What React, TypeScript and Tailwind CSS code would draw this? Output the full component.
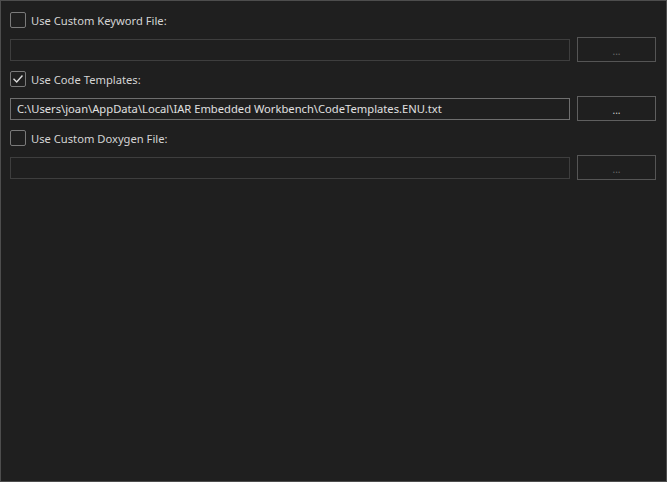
type Group = {
  key: string
  label: string
  checked: boolean
  value: string
}

const groups: Group[] = [
  { key: 'keyword', label: 'Use Custom Keyword File:', checked: false, value: '' },
  {
    key: 'templates',
    label: 'Use Code Templates:',
    checked: true,
    value: 'C:\\Users\\joan\\AppData\\Local\\IAR Embedded Workbench\\CodeTemplates.ENU.txt',
  },
  { key: 'doxygen', label: 'Use Custom Doxygen File:', checked: false, value: '' },
]

const Checkbox = ({ checked }: { checked: boolean }) => (
  <span className="flex h-[16px] w-[16px] items-center justify-center rounded-[2px] border-[1.5px] border-[#7a7a7a] bg-[#1f1f1f]">
    {checked && (
      <svg width="12" height="12" viewBox="0 0 12 12" fill="none">
        <path d="M2 6.3 L4.7 9 L10 3" stroke="#dcdcdc" strokeWidth="1.4" strokeLinecap="square" />
      </svg>
    )}
  </span>
)

export default function App() {
  return (
    <div
      className="h-[482px] w-[667px] border border-[#4d4d4d] bg-[#1f1f1f] px-[9px] pt-[11px] text-[11.2px] text-[#d4d4d4]"
      style={{ fontFamily: '"Noto Sans", "Open Sans", sans-serif' }}
    >
      {groups.map((g) => {
        const enabled = g.checked
        return (
          <div key={g.key} className="mb-[9px]">
            <label className="flex h-[16px] items-center gap-[5px]">
              <Checkbox checked={g.checked} />
              <span className="pt-[1px] leading-none">{g.label}</span>
            </label>
            <div className="mt-[9px] flex h-[25px] items-center gap-[7px]">
              <div
                className={
                  enabled
                    ? 'flex h-[22px] w-[560px] items-center border border-[#6e6e6e] px-[6px] text-[#e0e0e0]'
                    : 'flex h-[22px] w-[560px] items-center border border-[#3e3e3e] px-[6px]'
                }
              >
                <span className="whitespace-nowrap leading-none">{g.value}</span>
              </div>
              <button
                className={
                  enabled
                    ? 'flex h-[25px] w-[79px] items-end justify-center border border-[#5f5f5f] pb-[5px] text-[10px] leading-none text-[#d0d0d0]'
                    : 'flex h-[25px] w-[79px] items-end justify-center border border-[#555555] pb-[5px] text-[10px] leading-none text-[#6a6a6a]'
                }
              >
                ...
              </button>
            </div>
          </div>
        )
      })}
    </div>
  )
}
